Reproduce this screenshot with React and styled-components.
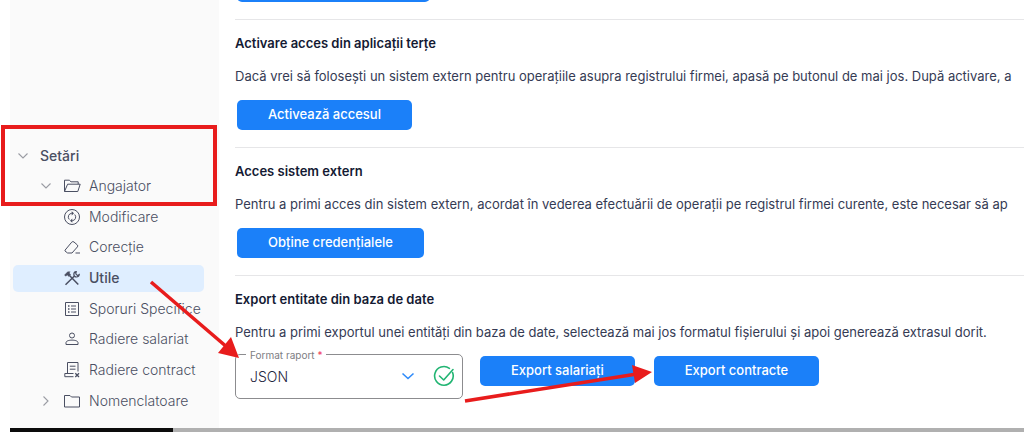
import styled, { createGlobalStyle } from "styled-components";

const menu = [
  { id: "setari", label: "Setări", arrow: "down", root: true },
  { id: "angajator", label: "Angajator", arrow: "down", icon: FolderOpenIcon },
  { id: "modificare", label: "Modificare", icon: SyncIcon },
  { id: "corectie", label: "Corecție", icon: EraserIcon },
  { id: "utile", label: "Utile", icon: ToolsIcon, active: true },
  { id: "sporuri", label: "Sporuri Specifice", icon: ListIcon },
  { id: "salariat", label: "Radiere salariat", icon: UserIcon },
  { id: "contract", label: "Radiere contract", icon: ContractIcon },
  { id: "nomenclatoare", label: "Nomenclatoare", arrow: "right", icon: FolderIcon },
];

export default function App() {
  return (
    <>
      <GlobalStyle />
      <Page>
        <Content>
          <Sidebar>
            <Menu>
              {menu.map((item) => <MenuItem key={item.id} item={item} />)}
            </Menu>
          </Sidebar>
          <Main>
            <Section>
              <Button type="button" $wide aria-label="Descarcă" />
            </Section>
            <Section $divided>
              <Title>Activare acces din aplicații terțe</Title>
              <Text>Dacă vrei să folosești un sistem extern pentru operațiile asupra registrului firmei, apasă pe butonul de mai jos. După activare, a</Text>
              <Button type="button">Activează accesul</Button>
            </Section>
            <Section $divided>
              <Title>Acces sistem extern</Title>
              <Text>Pentru a primi acces din sistem extern, acordat în vederea efectuării de operații pe registrul firmei curente, este necesar să ap</Text>
              <Button type="button">Obține credențialele</Button>
            </Section>
            <Section $divided $last>
              <Title>Export entitate din baza de date</Title>
              <Text>Pentru a primi exportul unei entități din baza de date, selectează mai jos formatul fișierului și apoi generează extrasul dorit.</Text>
              <ExportRow>
                <Field>
                  <FieldLabel htmlFor="format">Format raport <Required>*</Required></FieldLabel>
                  <Select id="format" defaultValue="JSON">
                    <option>JSON</option>
                    <option>CSV</option>
                  </Select>
                  <FieldIcons>
                    <svg width="14" height="14" viewBox="0 0 14 14" fill="none" stroke="#2f8bfa" strokeWidth="1.6">
                      <path d="M1.500 4.500 7 9.500l5.500-5" />
                    </svg>
                    <svg width="22" height="22" viewBox="0 0 22 22" fill="none" stroke="#22b573" strokeWidth="1.600" strokeLinecap="round" strokeLinejoin="round">
                      <path d="M19.600 7.600A9.300 9.300 0 1 1 16.400 3.400" />
                      <path d="m6.500 11 4.200 4L20 4.500" />
                    </svg>
                  </FieldIcons>
                </Field>
                <ButtonGroup>
                  <Button type="button">Export salariați</Button>
                  <Button type="button">Export contracte</Button>
                </ButtonGroup>
              </ExportRow>
            </Section>
          </Main>
        </Content>
        <BottomBar />
        <Highlight />
        <Arrows width="1024" height="432" viewBox="0 0 1024 432" aria-hidden="true">
          <path d="M151 282 228 348M465 401l172-27" stroke="#e81c1c" strokeWidth="3.600" />
          <path d="M239 358l-21-5 13-16zM652 372l-17 11-3-18z" fill="#e81c1c" />
        </Arrows>
      </Page>
    </>
  );
}

function MenuItem({ item }) {
  const Icon = item.icon;

  return (
    <li>
      <MenuLink href={"#" + item.id} $root={item.root} $active={item.active}>
        <ArrowSlot>{item.arrow && <Chevron direction={item.arrow} />}</ArrowSlot>
        {Icon && <Icon />}
        <span>{item.label}</span>
      </MenuLink>
    </li>
  );
}

function Chevron({ direction }) {
  return (
    <svg width="10" height="10" viewBox="0 0 10 10" fill="none" stroke="#9a9ca3" strokeWidth="1.100">
      <path d={direction === "down" ? "M.5 2.500 5 7l4.500-4.500" : "M2.500.5 7 5 2.500 9.500"} />
    </svg>
  );
}

function FolderOpenIcon() {
  return (
    <MenuIcon viewBox="0 0 18 18">
      <path d="M1.500 14.500V3.200h4.800l1.700 1.600h7.200v2.400M1.500 14.500 4.600 7.200h12.600l-2.400 7.300z" />
    </MenuIcon>
  );
}

function FolderIcon() {
  return (
    <MenuIcon viewBox="0 0 18 18">
      <path d="M1.500 3.500h5.500l1.500 1.500h8v10h-15z" />
    </MenuIcon>
  );
}

function SyncIcon() {
  return (
    <MenuIcon viewBox="0 0 18 18">
      <circle cx="9" cy="9" r="7.500" />
      <path d="M6.300 11.500A3.700 3.700 0 0 1 8.500 5.300h1M11.700 6.500a3.700 3.700 0 0 1-2.200 6.200h-1" />
      <path d="M8.700 3.200v4.200l2.300-2.100zM9.300 10.600v4.200L7 12.700z" fill="currentColor" stroke="none" />
    </MenuIcon>
  );
}

function EraserIcon() {
  return (
    <MenuIcon viewBox="0 0 18 18">
      <path d="M2 12.200 8.700 4.200q1.100-1.200 2.300-.2l3.300 2.900q1 1 .1 2l-5.400 6.100H4.600L2 13zM12.500 15H17" />
    </MenuIcon>
  );
}

function ToolsIcon() {
  return (
    <MenuIcon viewBox="0 0 18 18">
      <path d="m6.500 6.500 8.800 9M11.200 7.200l-8.700 8.600" strokeWidth="1.500" />
      <path d="M1.500 6 4.700 2.800h2.500L6.200 4l1.500 1.700-1.900 1.800L4.200 6 2.700 7.200z" fill="currentColor" strokeWidth=".4" />
      <path d="M13.200 2.600a2.700 2.700 0 1 0 3 3.100l-1.700.9-1.700-1.700z" strokeWidth="1.200" />
    </MenuIcon>
  );
}

function ListIcon() {
  return (
    <MenuIcon viewBox="0 0 18 18">
      <path d="M2.500 2.500h13v13h-13zM8 6h5M8 9h5M8 12h5" />
      <path d="M5 6h1.500M5 9h1.500M5 12h1.500" strokeWidth="1.500" />
    </MenuIcon>
  );
}

function UserIcon() {
  return (
    <MenuIcon viewBox="0 0 18 18">
      <circle cx="9" cy="5.500" r="2.500" />
      <path d="M3 14.500v-1.900c0-1.600 3-2.500 6-2.500s6 .9 6 2.500v1.900z" />
    </MenuIcon>
  );
}

function ContractIcon() {
  return (
    <MenuIcon viewBox="0 0 18 18">
      <path d="M4.500 12V1.500h10.500v9M6.800 5.200h5.700M6.800 8.200h5.700M10.500 12.500h-8.700v3.200h8.700" />
      <path d="m12.300 12.300 3.700 3.700M16 12.300 12.300 16" strokeWidth="1.300" />
    </MenuIcon>
  );
}

const GlobalStyle = createGlobalStyle`
  * {
    box-sizing: border-box;
  }
  body {
    margin: 0;
    background: #ffffff;
    color: #1f2640;
    font-family: "Inter", "Open Sans", sans-serif;
    font-size: 14px;
    font-weight: 300;
    line-height: 24px;
  }
`;

const Page = styled.div`
  position: relative;
  display: flex;
  flex-direction: column;
  height: 100vh;
  padding-left: 10px;
  overflow: hidden;
`;

const Content = styled.div`
  display: flex;
  flex: 1;
  min-height: 0;
`;

const Sidebar = styled.nav`
  display: flex;
  flex-direction: column;
  justify-content: flex-end;
  flex: 0 0 209px;
  padding: 0 15px 14px 3px;
  background: #fafafa;
`;

const Menu = styled.ul`
  display: grid;
  grid-auto-rows: 27px;
  align-content: space-between;
  height: 272px;
  margin: 0;
  padding: 0;
  list-style: none;
`;

const MenuLink = styled.a`
  display: flex;
  align-items: center;
  gap: 8px;
  height: 100%;
  padding-left: ${(props) => props.$root ? "5px" : "28px"};
  border-radius: 5px;
  background: ${(props) => props.$active ? "#dfeeff" : "transparent"};
  color: #4a4f62;
  font-weight: ${(props) => props.$root || props.$active ? 500 : 300};
  text-decoration: none;
  white-space: nowrap;
`;

const ArrowSlot = styled.span`
  display: flex;
  flex: 0 0 14px;
`;

const MenuIcon = styled.svg`
  flex: 0 0 18px;
  width: 18px;
  height: 18px;
  fill: none;
  stroke: currentColor;
  stroke-width: 1;
`;

const Main = styled.main`
  display: flex;
  flex: 1;
  flex-direction: column;
  justify-content: flex-end;
  min-width: 0;
  padding-left: 16px;
  overflow: hidden;
`;

const Section = styled.section`
  flex: none;
  padding-top: ${(props) => props.$divided ? "11px" : "0"};
  padding-bottom: ${(props) => props.$last ? "29px" : "17px"};
  border-top: ${(props) => props.$divided ? "1px solid #e6e6e8" : "none"};
`;

const Title = styled.h2`
  margin: 0 0 9px;
  color: #141a33;
  font-size: 13px;
  font-weight: 600;
`;

const Text = styled.p`
  margin: 0 0 12px;
  color: #353b54;
  font-size: 13px;
  font-weight: 400;
  white-space: nowrap;
`;

const Button = styled.button`
  display: block;
  min-width: ${(props) => props.$wide ? "193px" : "0"};
  height: 30px;
  margin-left: 2px;
  padding: 0 31px 2px;
  border: none;
  border-radius: 5px;
  background: #1b80f9;
  color: #ffffff;
  font-family: inherit;
  font-size: 13px;
  font-weight: 500;
  cursor: pointer;
`;

const ExportRow = styled.div`
  display: flex;
  gap: 15px;
  margin-top: -2px;
`;

const ButtonGroup = styled.div`
  display: flex;
  gap: 17px;
  padding-top: 2px;
`;

const Field = styled.div`
  position: relative;
  width: 228px;
  height: 45px;
`;

const FieldLabel = styled.label`
  position: absolute;
  top: -6px;
  left: 11px;
  padding: 0 4px;
  background: #ffffff;
  color: #7d7d82;
  font-size: 10px;
  font-weight: 400;
  line-height: 14px;
`;

const Required = styled.span`
  color: #ef3b5d;
`;

const Select = styled.select`
  width: 100%;
  height: 100%;
  padding: 0 80px 0 14px;
  border: 1px solid #8c8c8f;
  border-radius: 5px;
  appearance: none;
  background: transparent;
  color: inherit;
  font: inherit;
`;

const FieldIcons = styled.div`
  position: absolute;
  top: 11px;
  right: 8px;
  display: flex;
  align-items: center;
  gap: 18px;
  pointer-events: none;
`;

const BottomBar = styled.footer`
  flex: 0 0 4px;
  background: linear-gradient(to right, #0c0c0c 163px, #b0b0b0 163px);
`;

const Highlight = styled.div`
  position: absolute;
  top: 125px;
  left: 1px;
  width: 216px;
  height: 81px;
  border: 4px solid #e81c1c;
`;

const Arrows = styled.svg`
  position: absolute;
  top: 0;
  left: 0;
  fill: none;
  pointer-events: none;
`;
